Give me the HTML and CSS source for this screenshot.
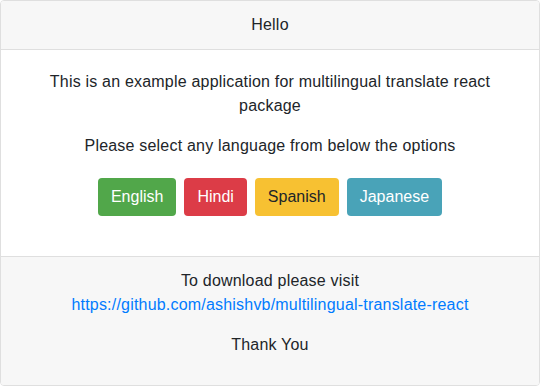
FILE: index.html
```html
<!DOCTYPE html>
<html lang="en">
<head>
  <meta charset="UTF-8">
  <meta name="viewport" content="width=device-width, initial-scale=1.0">
  <title>Multilingual Translate React</title>
  <link rel="stylesheet" href="styles.css">
</head>
<body>
  <div class="card">
    <div class="card-header">Hello</div>

    <div class="card-body">
      <p>This is an example application for multilingual translate react package</p>
      <p>Please select any language from below the options</p>
      <p class="lang-buttons">
        <button class="btn btn-success">English</button>
        <button class="btn btn-danger">Hindi</button>
        <button class="btn btn-warning">Spanish</button>
        <button class="btn btn-info">Japanese</button>
      </p>
    </div>

    <div class="card-footer">
      <p>To download please visit<br>
        <a href="https://github.com/ashishvb/multilingual-translate-react">https://github.com/ashishvb/multilingual-translate-react</a>
      </p>
      <p>Thank You</p>
    </div>
  </div>
</body>
</html>
```

FILE: styles.css
```css
body {
  font-family: "Liberation Sans", Arial, sans-serif;
  font-size: 16px;
  line-height: 1.5;
  letter-spacing: 0.2px;
  color: #212529;
  background-color: #fff;
  margin: 0;
}
p {
  margin: 0 0 16px;
}
a {
  color: #007bff;
  text-decoration: none;
}
.card {
  height: 386px;
  box-sizing: border-box;
  display: flex;
  flex-direction: column;
  border: 1px solid #dfdfdf;
  border-radius: 4px;
  text-align: center;
  overflow: hidden;
}
.card-header {
  background-color: #f7f7f7;
  border-bottom: 1px solid #dfdfdf;
  padding: 12px 20px;
}
.card-body {
  padding: 20px;
  flex: 1;
}
.card-footer {
  background-color: #f7f7f7;
  border-top: 1px solid #dfdfdf;
  padding: 12px 20px;
}
.lang-buttons {
  display: flex;
  justify-content: center;
}
.btn {
  font-family: inherit;
  font-size: 16px;
  line-height: 24px;
  letter-spacing: 0;
  padding: 6px 12px;
  margin: 4px;
  border: 1px solid transparent;
  border-radius: 4px;
  color: #fff;
  cursor: pointer;
}
.btn-success {
  background-color: #51a74a;
}
.btn-danger {
  background-color: #dc3c47;
}
.btn-warning {
  background-color: #f7c132;
  color: #212529;
}
.btn-info {
  background-color: #49a3b8;
}
```
